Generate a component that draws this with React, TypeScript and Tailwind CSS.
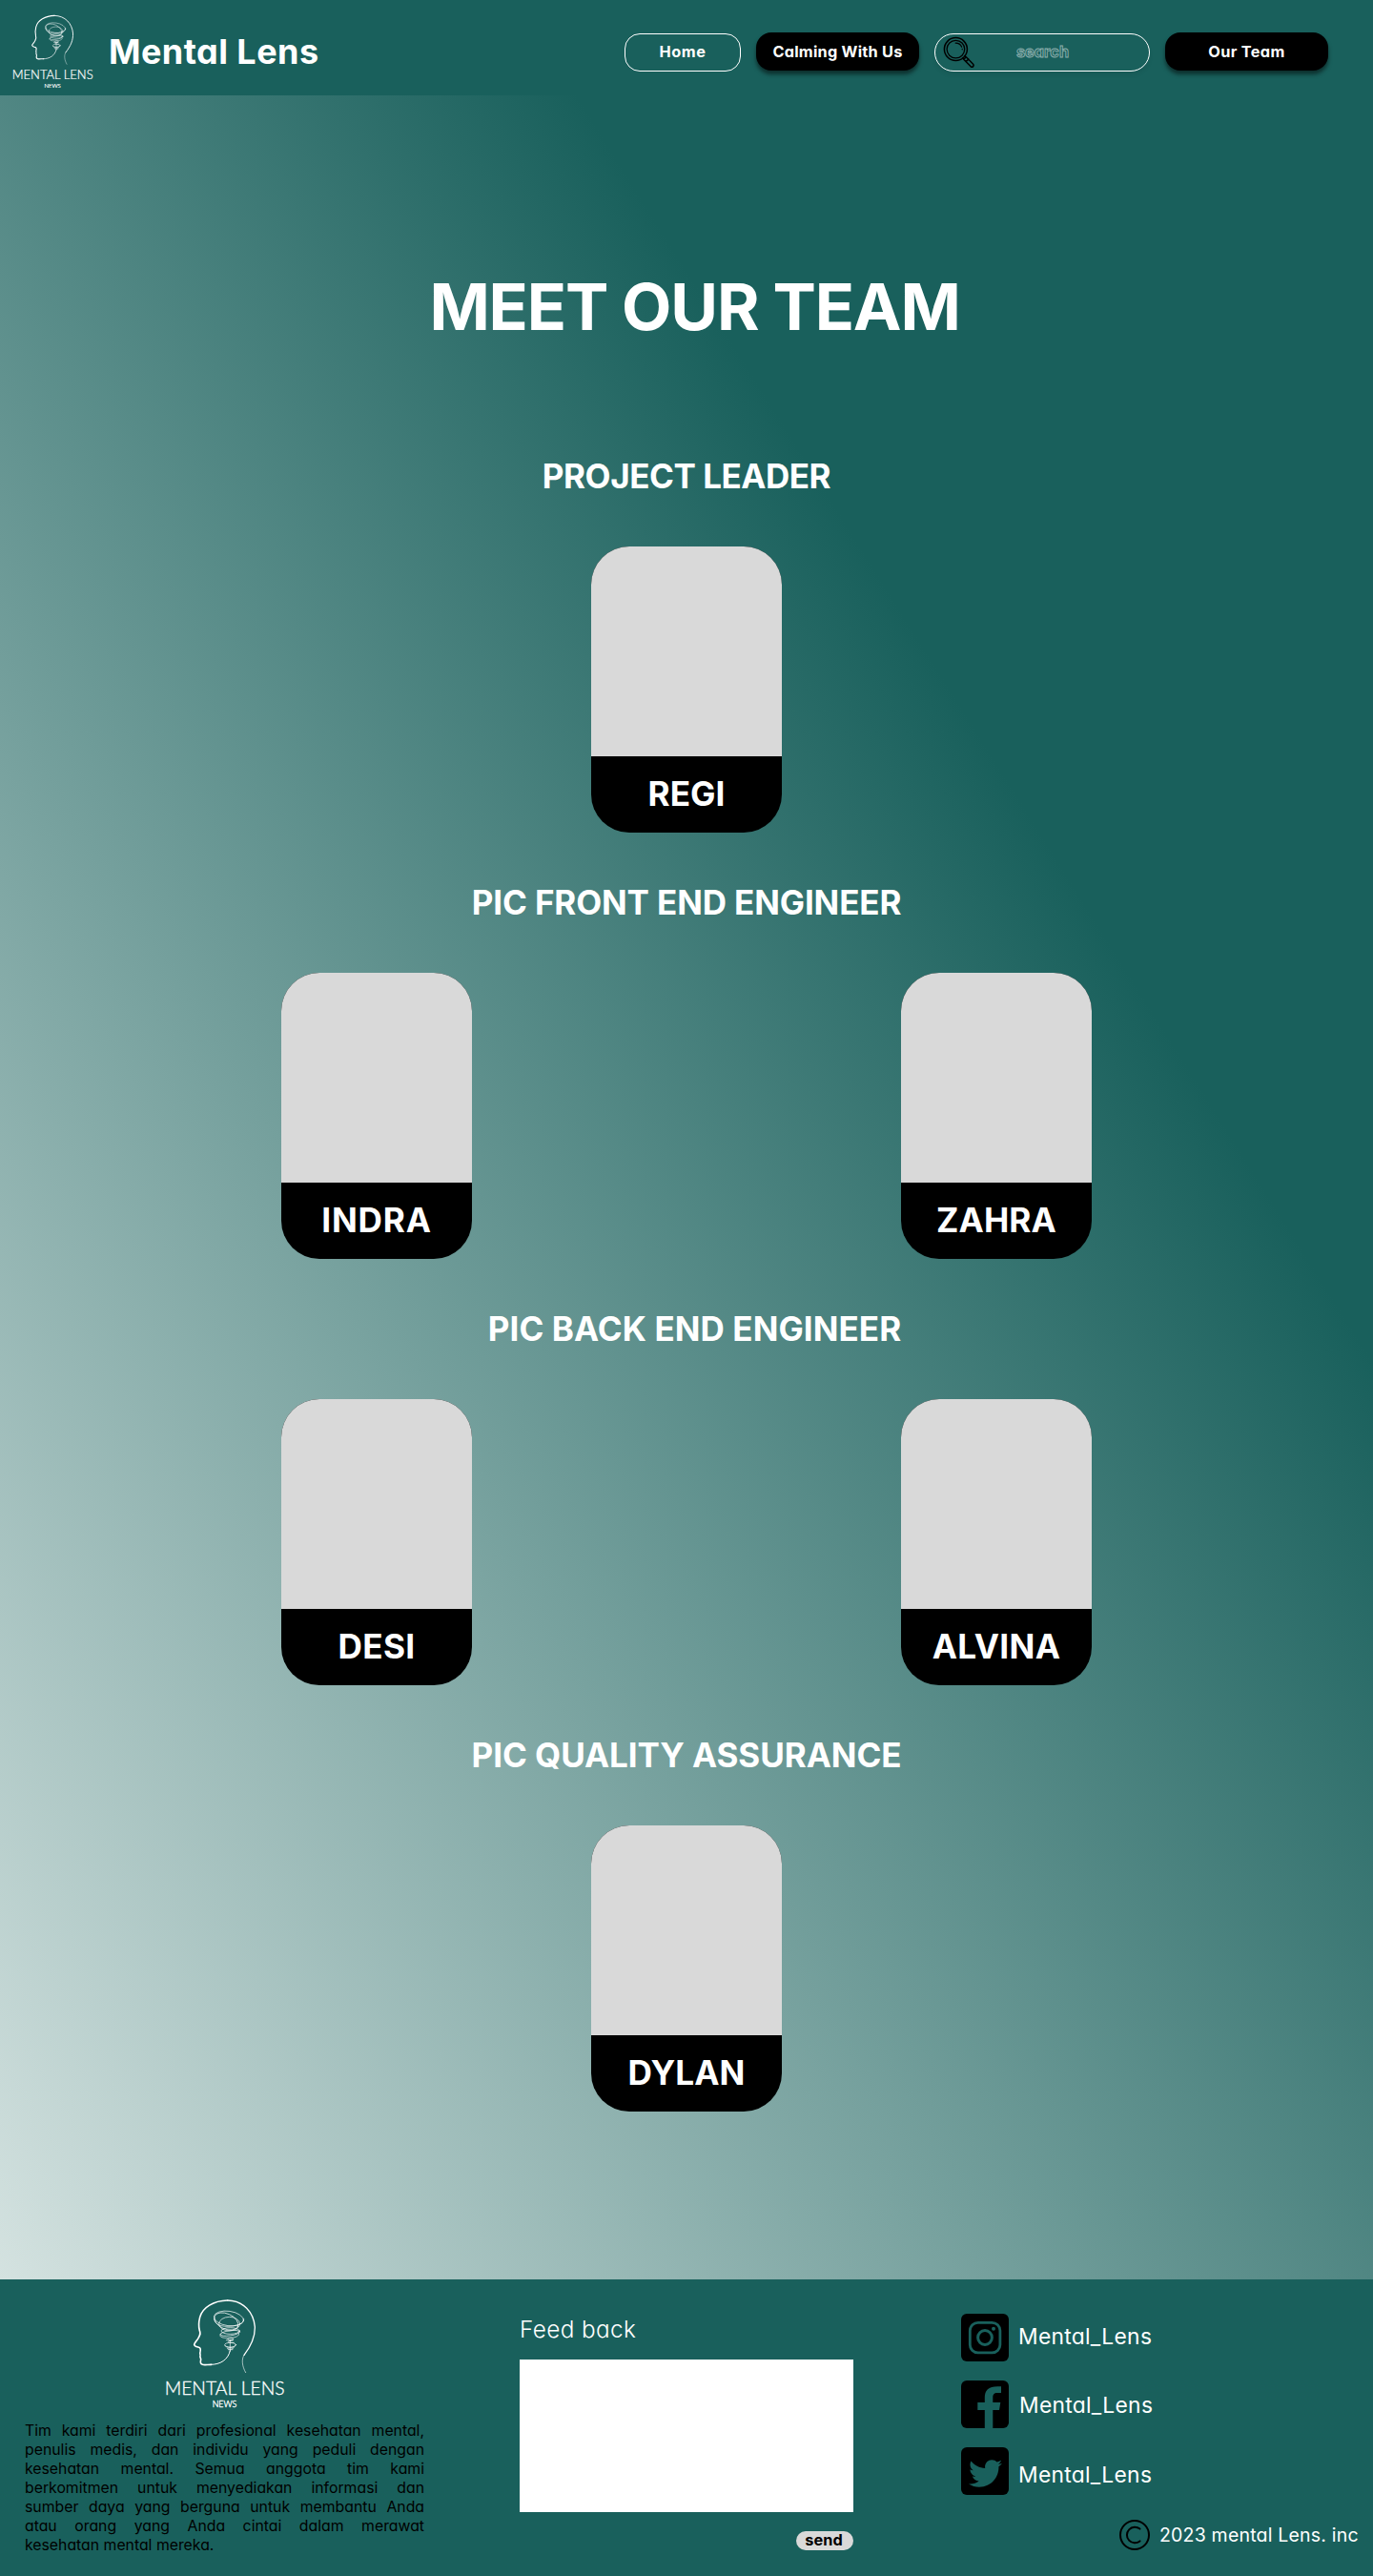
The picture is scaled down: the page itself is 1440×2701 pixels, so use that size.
import type { ReactNode } from 'react';
import { FaTwitter } from 'react-icons/fa';

function Logo({ className }: { className: string }) {
  return (
    <svg viewBox="60 20 400 360" className={`overflow-visible ${className}`} fill="none" stroke="#fff" strokeLinecap="round" strokeLinejoin="round">
      <path
        strokeWidth="4.8"
        d="M215 237 C203 237 193 239 187 237 C180 235 180 229 182 222 C183 217 178 215 180 209 C181 205 178 203 180 197 C182 189 182 185 176 183 C169 181 162 180 161 174 C162 167 171 161 175 152 C180 143 182 139 178 130 C174 116 176 100 179 88 C187 57 222 36 266 35"
      />
      <path strokeWidth="3.9" d="M266 35 C316 36 348 72 352 118 C353 150 342 176 318 207" />
      <path strokeWidth="1.8" d="M318 207 C309 220 312 243 323 262" />
      <path strokeWidth="3" d="M213 237 C243 237 268 222 274 193" />
      <g strokeWidth="2">
        <ellipse cx="270" cy="92" rx="47" ry="23" transform="rotate(8 270 92)" />
        <ellipse cx="262" cy="101" rx="40" ry="24" transform="rotate(24 262 101)" />
        <ellipse cx="272" cy="109" rx="33" ry="22" />
        <path d="M224 94 C226 116 258 122 296 113 C312 108 318 102 317 93" />
        <ellipse cx="275" cy="131" rx="29" ry="10" />
        <ellipse cx="274" cy="138" rx="31" ry="8" transform="rotate(-8 274 138)" />
        <path d="M245 140 C235 152 256 154 274 153 C300 152 306 141 300 137" />
        <path d="M262 160 C280 163 294 154 276 153 C262 154 262 162 284 160 C262 164 262 170 286 168" />
        <ellipse cx="275" cy="175" rx="18" ry="7" />
        <path d="M258 178 C262 186 292 186 290 176 M265 186 C272 190 282 189 286 184 M268 190 L282 190 M274 160 L274 195" />
      </g>
      <g fill="#fff" strokeWidth="1" fontFamily="Lato, sans-serif" fontWeight="300">
        <text x="68" y="332" fontSize="61" textLength="378" lengthAdjust="spacingAndGlyphs">MENTAL LENS</text>
        <text x="218" y="371" fontSize="27" textLength="77" lengthAdjust="spacingAndGlyphs">NEWS</text>
      </g>
    </svg>
  );
}

function SearchIcon() {
  return (
    <svg viewBox="0 0 34 34" className="ml-[8px] h-[34px] w-[34px]" fill="none" stroke="#000" strokeLinecap="round">
      <circle cx="13.4" cy="13.6" r="12" strokeWidth="1.5" />
      <circle cx="13.4" cy="13.6" r="9.3" strokeWidth="1.3" />
      <path strokeWidth="1.2" d="M13.2 7.2 C16 7.2 18.6 8.8 19.6 11.3 M20.2 13.3 v.5" />
      <path strokeWidth="1.5" strokeLinejoin="round" d="M21.7 24.3 L24.3 21.7 L31.6 29.2 C33 31 31 33 29.2 31.8 Z M20.6 22.8 L22 24 M22.6 20.6 L24.3 21.8 M24 26.6 L26.8 24" />
    </svg>
  );
}

function Tile({ children }: { children: ReactNode }) {
  return <span className="flex h-[50px] w-[50px] shrink-0 rounded-[6px] bg-black">{children}</span>;
}

function Card({ name, tracking }: { name: string; tracking: string }) {
  return (
    <article className="flex h-[300px] w-[200px] flex-col overflow-hidden rounded-[40px] bg-black">
      <div className="h-[220px] bg-[#d9d9d9]" />
      <h3 className={`flex h-[80px] items-center justify-center pb-px text-[35.2px] font-bold ${tracking}`}>{name}</h3>
    </article>
  );
}

type Member = { name: string; tracking: string };

function Section({ title, className, members }: { title: string; className: string; members: Member[] }) {
  return (
    <section className="flex flex-col items-center pb-[54px]">
      <h2 className={`mb-[53px] h-[40px] text-[35px] leading-[38px] font-bold whitespace-nowrap ${className}`}>{title}</h2>
      <div className="flex gap-[450px]">
        {members.map((m) => (
          <Card key={m.name} {...m} />
        ))}
      </div>
    </section>
  );
}

const aboutLines = [
  'Tim kami terdiri dari profesional kesehatan mental,',
  'penulis medis, dan individu yang peduli dengan',
  'kesehatan mental. Semua anggota tim kami',
  'berkomitmen untuk menyediakan informasi dan',
  'sumber daya yang berguna untuk membantu Anda',
  'atau orang yang Anda cintai dalam merawat',
];

export default function App() {
  return (
    <div className="w-[1440px] font-['Inter',sans-serif] text-white [font-feature-settings:'cv11']">
      <header className="flex h-[100px] bg-[#19605c]">
        <Logo className="mt-[12.7px] ml-[11.3px] h-[80.8px] w-[89.8px] shrink-0" />
        <div className="ml-[12.9px] w-[541px] pt-[9px] text-[36px] leading-[91px] font-bold tracking-[0.45px]">Mental Lens</div>
        <nav className="mt-[34px] flex h-[41px] gap-[16px] text-[16.3px] font-bold">
          <a className="mt-px flex h-[40px] w-[122px] items-center justify-center rounded-[16px] border border-white pb-px tracking-[0.6px]">Home</a>
          <a className="flex h-[40px] w-[171px] items-center justify-center rounded-[16px] bg-black pt-px tracking-[0.23px] shadow-[0_4px_4px_rgba(0,0,0,0.5)]">Calming With Us</a>
          <div className="mt-px flex h-[40px] w-[226px] items-center rounded-[20px] border border-white shadow-[0_4px_4px_rgba(0,0,0,0.06)]">
            <SearchIcon />
            <span className="ml-[43px] pb-[2px] text-transparent [-webkit-text-stroke:0.9px_rgba(255,255,255,0.5)]">search</span>
          </div>
          <a className="flex h-[40px] w-[171px] items-center justify-center rounded-[16px] bg-black pt-px tracking-[0.35px] shadow-[0_4px_4px_rgba(0,0,0,0.5)]">Our Team</a>
        </nav>
      </header>

      <main className="h-[2290px] bg-[linear-gradient(to_top_right,#d4e2e0_0%,#19605c_71%)] pt-[187px]">
        <h1 className="mb-[125px] h-[68px] pl-[17px] text-center text-[68px] leading-[68px] font-bold tracking-[-1.15px]">MEET OUR TEAM</h1>
        <Section title="PROJECT LEADER" className="tracking-[-0.45px]" members={[{ name: 'REGI', tracking: 'tracking-[0px]' }]} />
        <Section
          title="PIC FRONT END ENGINEER"
          className="tracking-[-0.12px]"
          members={[
            { name: 'INDRA', tracking: 'tracking-[0.8px]' },
            { name: 'ZAHRA', tracking: 'tracking-[0.1px]' },
          ]}
        />
        <Section
          title="PIC BACK END ENGINEER"
          className="pl-[17px] tracking-[0.09px]"
          members={[
            { name: 'DESI', tracking: 'tracking-[0.3px]' },
            { name: 'ALVINA', tracking: 'tracking-[0.3px]' },
          ]}
        />
        <Section title="PIC QUALITY ASSURANCE" className="tracking-[-0.06px]" members={[{ name: 'DYLAN', tracking: 'tracking-[0.1px]' }]} />
      </main>

      <footer className="flex h-[311px] bg-[#19605c]">
        <div className="ml-[26px] w-[419px]">
          <Logo className="mt-[16.7px] ml-[144px] h-[120px] w-[133.3px]" />
          <p className="mt-[12px] text-[15.8px] leading-[20px] text-black">
            {aboutLines.map((line) => (
              <span key={line} className="block whitespace-nowrap [text-align-last:justify]">{line}</span>
            ))}
            <span className="block">kesehatan mental mereka.</span>
          </p>
        </div>

        <form className="ml-[100px] flex w-[350px] flex-col pt-[35px]">
          <label className="h-[49px] text-[24.3px] leading-[35px] font-[350] tracking-[0.4px]">Feed back</label>
          <div className="h-[160px] bg-white" />
          <button type="button" className="mt-[20px] h-[20px] w-[60px] self-end rounded-[10px] bg-[#d9d9d9] pr-[2px] pb-px text-[16.3px] leading-[19px] font-bold tracking-[0.1px] text-black">send</button>
        </form>

        <div className="ml-[113px] flex w-[432px] flex-col pt-[36px]">
          <ul className="flex flex-col gap-[20px] text-[22.8px] leading-[50px] tracking-[0.3px]">
            <li className="flex h-[50px]">
              <Tile>
                <svg viewBox="0 0 50 50" fill="none" stroke="#19605c">
                  <rect x="9.3" y="9.3" width="31.6" height="31.6" rx="8.5" strokeWidth="2.8" />
                  <circle cx="25" cy="25" r="7.4" strokeWidth="3" />
                  <circle cx="34" cy="15.8" r="2" fill="#19605c" stroke="none" />
                </svg>
              </Tile>
              <span className="-mt-px ml-[10px]">Mental_Lens</span>
            </li>
            <li className="flex h-[50px]">
              <Tile>
                <svg viewBox="0 0 50 50" fill="#19605c">
                  <path d="M24.8 50 V31 H17.3 V23 H24.8 V18 C24.8 9.5 29.5 5.2 42 6.3 V13 H38 C34.5 13 33.3 14.6 33.3 18 V23 H41.3 L40 31 H33.3 V50 Z" />
                </svg>
              </Tile>
              <span className="ml-[11px] pt-px">Mental_Lens</span>
            </li>
            <li className="flex h-[50px]">
              <Tile>
                <FaTwitter className="mt-[10px] ml-[8px] h-[35px] w-[35px] text-[#19605c]" />
              </Tile>
              <span className="ml-[10px] pt-[4px]">Mental_Lens</span>
            </li>
          </ul>
          <div className="mt-[26px] ml-[166px] flex h-[32px] items-center">
            <svg viewBox="0 0 32 32" className="h-[32px] w-[32px]" fill="none" stroke="#000" strokeWidth="2">
              <circle cx="16" cy="16" r="15" />
              <path strokeLinecap="round" d="M21.5 9.6 A8.3 8.3 0 1 0 21.5 22.4" />
            </svg>
            <span className="ml-[10px] text-[19.5px] leading-[32px] tracking-[0.2px] whitespace-nowrap">2023 mental Lens. inc</span>
          </div>
        </div>
      </footer>
    </div>
  );
}
